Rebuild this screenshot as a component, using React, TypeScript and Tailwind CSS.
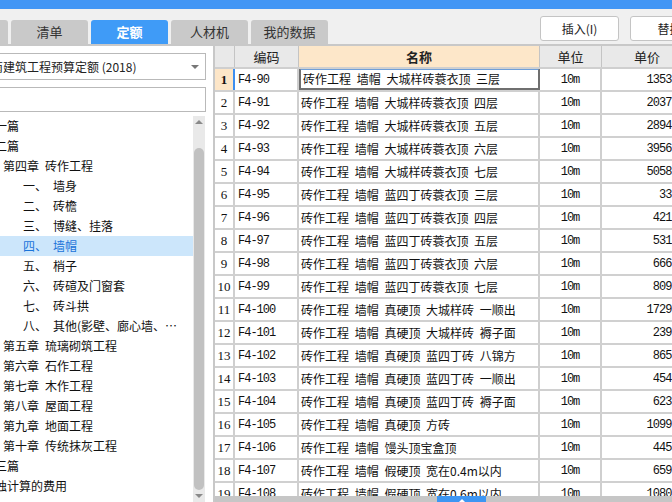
import React from 'react';

// ─── Dados ────────────────────────────────────────────────────────────────────

const CJK = '"Noto Sans CJK SC", "Liberation Sans", sans-serif';
const MONO = '"Liberation Mono", "Noto Sans CJK SC", monospace';

type TreeItem = { level: 0 | 1 | 2; head?: string; text: string; selected?: boolean };

const TREE: TreeItem[] = [
  { level: 0, text: '第一篇' },
  { level: 0, text: '第二篇' },
  { level: 1, head: '第四章', text: '砖作工程' },
  { level: 2, head: '一、', text: '墙身' },
  { level: 2, head: '二、', text: '砖檐' },
  { level: 2, head: '三、', text: '博缝、挂落' },
  { level: 2, head: '四、', text: '墙帽', selected: true },
  { level: 2, head: '五、', text: '梢子' },
  { level: 2, head: '六、', text: '砖碹及门窗套' },
  { level: 2, head: '七、', text: '砖斗拱' },
  { level: 2, head: '八、', text: '其他(影壁、廊心墙、…' },
  { level: 1, head: '第五章', text: '琉璃砌筑工程' },
  { level: 1, head: '第六章', text: '石作工程' },
  { level: 1, head: '第七章', text: '木作工程' },
  { level: 1, head: '第八章', text: '屋面工程' },
  { level: 1, head: '第九章', text: '地面工程' },
  { level: 1, head: '第十章', text: '传统抹灰工程' },
  { level: 0, text: '第三篇' },
  { level: 0, text: '单独计算的费用' },
];

const ROWS: [string, string, string][] = [
  ['F4-90', '砖作工程 墙帽 大城样砖蓑衣顶 三层', '1353.62'],
  ['F4-91', '砖作工程 墙帽 大城样砖蓑衣顶 四层', '2037.18'],
  ['F4-92', '砖作工程 墙帽 大城样砖蓑衣顶 五层', '2894.35'],
  ['F4-93', '砖作工程 墙帽 大城样砖蓑衣顶 六层', '3956.07'],
  ['F4-94', '砖作工程 墙帽 大城样砖蓑衣顶 七层', '5058.41'],
  ['F4-95', '砖作工程 墙帽 蓝四丁砖蓑衣顶 三层', '33.86'],
  ['F4-96', '砖作工程 墙帽 蓝四丁砖蓑衣顶 四层', '421.53'],
  ['F4-97', '砖作工程 墙帽 蓝四丁砖蓑衣顶 五层', '531.20'],
  ['F4-98', '砖作工程 墙帽 蓝四丁砖蓑衣顶 六层', '666.94'],
  ['F4-99', '砖作工程 墙帽 蓝四丁砖蓑衣顶 七层', '809.77'],
  ['F4-100', '砖作工程 墙帽 真硬顶 大城样砖 一顺出', '1729.45'],
  ['F4-101', '砖作工程 墙帽 真硬顶 大城样砖 褥子面', '239.68'],
  ['F4-102', '砖作工程 墙帽 真硬顶 蓝四丁砖 八锦方', '865.12'],
  ['F4-103', '砖作工程 墙帽 真硬顶 蓝四丁砖 一顺出', '454.39'],
  ['F4-104', '砖作工程 墙帽 真硬顶 蓝四丁砖 褥子面', '623.81'],
  ['F4-105', '砖作工程 墙帽 真硬顶 方砖', '1099.26'],
  ['F4-106', '砖作工程 墙帽 馒头顶宝盒顶', '445.50'],
  ['F4-107', '砖作工程 墙帽 假硬顶 宽在0.4m以内', '659.03'],
  ['F4-108', '砖作工程 墙帽 假硬顶 宽在0.6m以内', '1080.97'],
];

const TABS = ['工料机', '清单', '定额', '人材机', '我的数据'];

// ─── Componentes ──────────────────────────────────────────────────────────────

function Tree() {
  return (
    <div className="flex flex-1 mt-[4px] min-h-0">
      <div className="w-[193px] overflow-hidden">
        {TREE.map((it, i) => (
          <div
            key={i}
            className={`h-[20px] flex items-center whitespace-nowrap text-[12px] ${
              it.selected ? 'bg-[#cce6fb] text-[#1a73d9]' : 'text-[#111]'
            }`}
          >
            <span
              className={
                it.level === 0 ? 'ml-[-17px]' : it.level === 1 ? 'ml-[3px]' : 'ml-[23px]'
              }
            >
              {it.head}
            </span>
            <span className={it.head ? 'ml-[6px]' : ''}>{it.text}</span>
          </div>
        ))}
      </div>
      {/* barra de rolagem vertical */}
      <div className="w-[12px] bg-[#e9e9e9] flex flex-col items-center">
        <div className="h-[12px] flex items-center justify-center">
          <div className="w-0 h-0 border-l-[4px] border-r-[4px] border-b-[4px] border-l-transparent border-r-transparent border-b-[#8a8a8a]" />
        </div>
        <div className="mt-[20px] h-[342px] w-[10px] rounded-full bg-[#c1c1c1]" />
        <div className="flex-1 flex items-center justify-center">
          <div className="w-0 h-0 border-l-[4px] border-r-[4px] border-t-[4px] border-l-transparent border-r-transparent border-t-[#8a8a8a]" />
        </div>
      </div>
      <div className="w-[8px]" />
    </div>
  );
}

function LeftPanel() {
  return (
    <div className="w-[213px] bg-white flex flex-col overflow-hidden">
      <div className="mt-[7px] ml-[-2px] w-[208px] h-[27px] shrink-0 border border-[#b9b9b9] flex items-center overflow-hidden relative">
        <span className="ml-[-8px] whitespace-nowrap text-[12px] text-[#222]">
          南建筑工程预算定额 (2018)
        </span>
        <div className="absolute right-[6px] top-[11px] w-0 h-0 border-l-[4px] border-r-[4px] border-t-[4px] border-l-transparent border-r-transparent border-t-[#777]" />
      </div>
      <div className="mt-[7px] ml-[-2px] w-[208px] h-[25px] shrink-0 border border-[#b9b9b9]" />
      <Tree />
    </div>
  );
}

function Table() {
  const cols = 'grid grid-cols-[20px_64px_241px_62px_90px] w-[477px]';
  return (
    <div className="flex-1 bg-white flex flex-col overflow-hidden">
      <div className={`${cols} h-[23px] shrink-0 border-b-2 border-[#cfcfcf] text-[13px] text-[#222]`}>
        <div className="bg-[#e9e9e9] border-r border-[#c4c4c4]" />
        <div className="bg-[#e9e9e9] border-r border-[#c4c4c4] flex items-center justify-center">编码</div>
        <div className="bg-[#fde7c9] border-r border-[#c4c4c4] flex items-center justify-center font-bold">名称</div>
        <div className="bg-[#e9e9e9] border-r border-[#c4c4c4] flex items-center justify-center">单位</div>
        <div className="bg-[#e9e9e9] flex items-center justify-center">单价</div>
      </div>
      <div className="flex-1 overflow-hidden">
        {ROWS.map(([code, name, price], i) => {
          const first = i === 0;
          return (
            <div key={code} className={`${cols} h-[23px] border-b-2 border-[#d0d0d0] text-[12px] text-[#111]`}>
              <div
                className={`flex items-center justify-center border-r-2 text-[13px] ${
                  first ? 'bg-[#fde6c8] border-[#3d8ef0] font-bold' : 'bg-white border-[#cfcfcf]'
                }`}
                style={{ fontFamily: '"Liberation Serif", serif' }}
              >
                {i + 1}
              </div>
              <div
                className="flex items-center pl-[3px] border-r-2 border-[#cfcfcf] whitespace-nowrap tracking-[-1px]"
                style={{ fontFamily: MONO }}
              >
                {code}
              </div>
              <div
                className={`flex items-center pl-[2px] whitespace-nowrap [word-spacing:3px] ${
                  first ? 'border-2 border-[#6f6f6f] border-t-[#6f9fd8] mt-[-1px]' : 'border-r-2 border-[#cfcfcf]'
                }`}
              >
                {name}
              </div>
              <div className="flex items-center justify-center border-r-2 border-[#cfcfcf]" style={{ fontFamily: MONO }}>
                <span className="tracking-[-1px]">10m</span>
              </div>
              <div className="flex items-center justify-end pr-[2px]" style={{ fontFamily: MONO }}>
                <span className="tracking-[-1px]">{price}</span>
              </div>
            </div>
          );
        })}
      </div>
      {/* barra de rolagem horizontal */}
      <div className="h-[6px] shrink-0 bg-[#c6c6c6] flex">
        <div className="ml-[222px] w-[49px] bg-[#3d96f3] flex justify-center items-end">
          <div className="w-0 h-0 border-l-[3px] border-r-[3px] border-b-[3px] border-l-transparent border-r-transparent border-b-white" />
        </div>
      </div>
    </div>
  );
}

export default function App() {
  return (
    <div className="w-[672px] h-[502px] overflow-hidden bg-[#f0f0f0] flex flex-col" style={{ fontFamily: CJK }}>
      <div className="h-[9px] shrink-0 bg-[#4296f5]" />
      {/* abas + botões */}
      <div className="h-[35px] shrink-0 flex items-end">
        <div className="flex gap-[3px] ml-[-69px] shrink-0">
          {TABS.map((t) => (
            <div
              key={t}
              className={`w-[77px] h-[24px] rounded-t-[3px] flex items-center justify-center text-[13px] ${
                t === '定额' ? 'bg-[#3f9bf7] text-white font-bold' : 'bg-[#c9c9c9] text-[#333]'
              }`}
            >
              {t}
            </div>
          ))}
        </div>
        <div className="flex gap-[11px] ml-[212px] self-start mt-[7px] shrink-0">
          <div className="w-[79px] h-[25px] bg-white border border-[#c4c4c4] rounded-[3px] flex items-center justify-center text-[12px] text-[#222]">
            插入(I)
          </div>
          <div className="w-[79px] h-[25px] bg-white border border-[#c4c4c4] rounded-[3px] flex items-center justify-center text-[12px] text-[#222]">
            替换
          </div>
        </div>
      </div>
      <div className="h-[2px] shrink-0 bg-[#c8c8c8]" />
      <div className="flex-1 flex min-h-0">
        <LeftPanel />
        <div className="w-[2px] bg-[#c8c8c8]" />
        <Table />
      </div>
    </div>
  );
}
